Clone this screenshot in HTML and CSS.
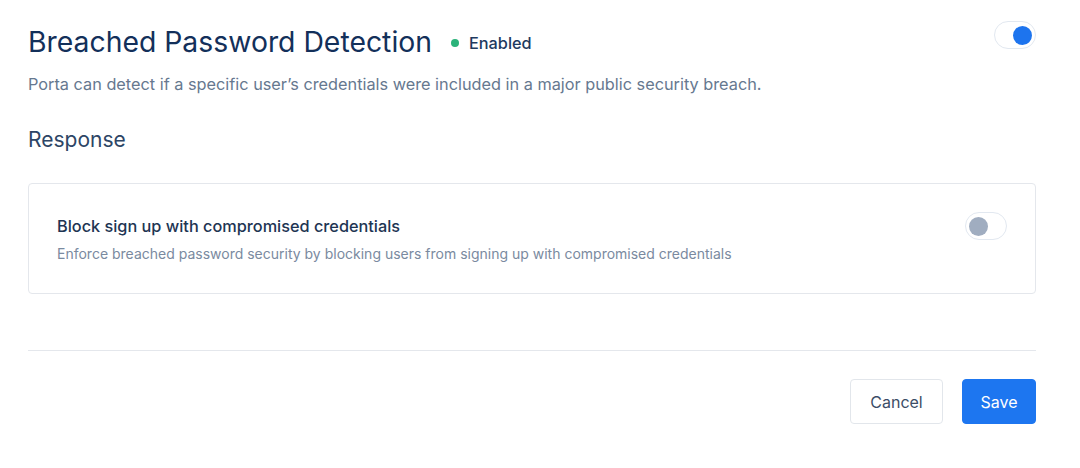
FILE: index.html
```html
<!DOCTYPE html>
<html lang="en">
    <head>
        <meta charset="UTF-8">
        <meta name="viewport" content="width=device-width, initial-scale=1.0">
        <title>Breached Password Detection</title>
        <link rel="stylesheet" href="styles.css">
    </head>
    <body>
        <div class="clPage">
            <div class="clHeader">
                <h1 class="clTitle">Breached Password Detection</h1>
                <span class="clStatus"><span class="clDot"></span>Enabled</span>
                <div class="clToggle clOn"><span class="clKnob"></span></div>
            </div>
            <p class="clDesc">Porta can detect if a specific user’s credentials were included in a major public security breach.</p>

            <h2 class="clSection">Response</h2>

            <div class="clCard">
                <div class="clCardText">
                    <div class="clCardTitle">Block sign up with compromised credentials</div>
                    <div class="clCardSub">Enforce breached password security by blocking users from signing up with compromised credentials</div>
                </div>
                <div class="clToggle"><span class="clKnob"></span></div>
            </div>

            <hr class="clDivider">

            <div class="clBotoes">
                <button class="clBtn clCancel">Cancel</button>
                <button class="clBtn clSave">Save</button>
            </div>
        </div>
    </body>
</html>
```

FILE: styles.css
```css
/*Reset*/
html,
body,
p,
h1,
h2,
hr {
margin: 0;
padding: 0;
}

html {
box-sizing: border-box;
}

*, *::before, *::after {
box-sizing: inherit;
}

/*Página*/

body{
    background: #ffffff;
    font-family: Inter, "Noto Sans", sans-serif;
    color: #1e3a5f;
}

.clPage{
    width: 1008px;
    margin-left: 28px;
    padding-top: 22px;
}

.clHeader{
    display: flex;
    align-items: center;
    height: 40px;
}

.clTitle{
    font-size: 28.35px;
    line-height: 40px;
    font-weight: 400;
    color: #13305a;
}

.clStatus{
    display: flex;
    align-items: center;
    margin-left: 19px;
    font-size: 16.3px;
    font-weight: 500;
    color: #1e3a5f;
    margin-top: 2px;
}

.clDot{
    width: 8px;
    height: 8px;
    border-radius: 50%;
    background: #2bb37a;
    margin-right: 10px;
}

.clToggle{
    width: 42px;
    height: 28px;
    border: 1px solid #e2e8f0;
    border-radius: 14px;
    background: #ffffff;
    display: flex;
    align-items: center;
    padding: 0 3px;
    flex-shrink: 0;
}

.clToggle .clKnob{
    width: 19px;
    height: 19px;
    border-radius: 50%;
    background: #a0adc0;
}

.clHeader .clToggle{
    margin-left: auto;
    align-self: flex-start;
    margin-top: -1px;
}

.clOn{
    justify-content: flex-end;
}

.clOn .clKnob{
    background: #1d74ee;
}

.clDesc{
    margin-top: 12px;
    font-size: 16.3px;
    line-height: 20px;
    color: #66788f;
}

.clSection{
    margin-top: 34px;
    font-size: 21px;
    line-height: 24px;
    font-weight: 400;
    color: #2d4565;
}

.clCard{
    margin-top: 31px;
    height: 111px;
    border: 1px solid #e4e7ec;
    border-radius: 4px;
    display: flex;
    align-items: center;
    padding: 0 28px 0 28px;
}

.clCardText{
    flex: 1;
}

.clCardTitle{
    font-size: 16.3px;
    line-height: 20px;
    font-weight: 500;
    color: #1e3553;
}

.clCardSub{
    margin-top: 10px;
    font-size: 14px;
    line-height: 16px;
    color: #7a8aa0;
}

.clCard .clToggle{
    align-self: flex-start;
    margin-top: 28px;
}

.clDivider{
    margin-top: 56px;
    border: 0;
    border-top: 1px solid #e4e7ec;
}

.clBotoes{
    display: flex;
    justify-content: flex-end;
    gap: 19px;
    margin-top: 28px;
}

.clBtn{
    font-family: Inter, "Noto Sans", sans-serif;
    font-size: 16px;
    height: 45px;
    border-radius: 4px;
    cursor: pointer;
}

.clCancel{
    width: 93px;
    background: #ffffff;
    border: 1px solid #e2e6eb;
    color: #3b4d66;
}

.clSave{
    width: 74px;
    background: #1d76f0;
    border: 1px solid #1d76f0;
    color: #ffffff;
}
```
